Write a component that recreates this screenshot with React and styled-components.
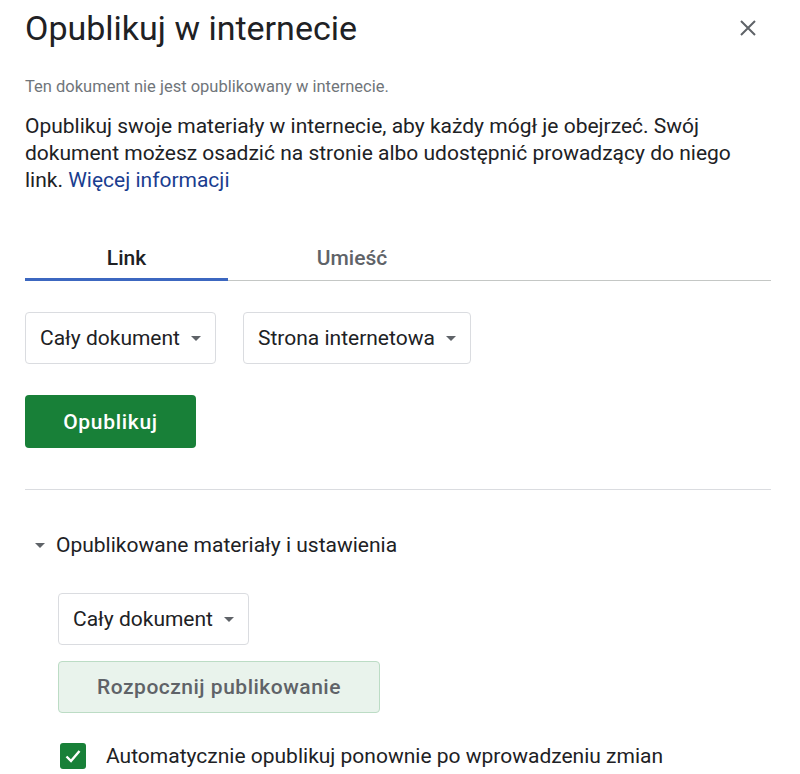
import React from 'react';
import styled, { createGlobalStyle } from 'styled-components';

const GlobalStyle = createGlobalStyle`
  html, body {
    margin: 0;
    background: #fff;
    font-family: Roboto, "Noto Sans", Arial, sans-serif;
    color: #202124;
  }
`;

const Dialog = styled.div`
  width: 800px;
  box-sizing: border-box;
  padding: 8px 29px 0 25px;
`;

const Header = styled.div`
  display: flex;
  justify-content: space-between;
  align-items: center;
  height: 40px;
`;

const Title = styled.h1`
  margin: 0;
  font-size: 34px;
  font-weight: 400;
  color: #202124;
`;

const Close = styled.button`
  border: 0;
  background: none;
  padding: 0;
  margin-right: 11px;
  width: 24px;
  height: 24px;
  display: flex;
  align-items: center;
  justify-content: center;
  cursor: pointer;
`;

const Status = styled.p`
  margin: 29px 0 0;
  font-size: 16.5px;
  line-height: 19px;
  color: #70757a;
`;

const Intro = styled.p`
  margin: 17px 0 0;
  width: 748px;
  font-size: 21px;
  line-height: 27px;
  color: #202124;
`;

const More = styled.a`
  color: #1a3d8f;
  text-decoration: none;
`;

const Tabs = styled.div`
  display: flex;
  margin-top: 52px;
  border-bottom: 1px solid #c4c7c5;
`;

const Tab = styled.div`
  width: ${p => p.$width}px;
  text-align: center;
  font-size: 21px;
  line-height: 24px;
  font-weight: 500;
  padding-bottom: 8px;
  color: ${p => (p.$active ? '#202124' : '#5f6368')};
  border-bottom: 3px solid ${p => (p.$active ? '#3c67c0' : 'transparent')};
  margin-bottom: -1px;
`;

const Row = styled.div`
  display: flex;
  gap: 27px;
  margin-top: 31px;
`;

const Select = styled.div`
  display: inline-flex;
  align-items: center;
  gap: 11px;
  height: 52px;
  box-sizing: border-box;
  padding: 0 14px;
  border: 1px solid #dadce0;
  border-radius: 4px;
  font-size: 21px;
  color: #202124;
  background: #fff;
`;

const Caret = styled.span`
  width: 0;
  height: 0;
  border-left: 5px solid transparent;
  border-right: 5px solid transparent;
  border-top: 5px solid #5f6368;
`;

const PublishButton = styled.button`
  display: block;
  margin-top: 31px;
  width: 171px;
  height: 53px;
  border: 0;
  border-radius: 4px;
  background: #188038;
  color: #fff;
  font-family: inherit;
  font-size: 21px;
  letter-spacing: 0.7px;
  font-weight: 500;
`;

const Divider = styled.hr`
  margin: 41px 0 0;
  border: 0;
  border-top: 1px solid #dadce0;
`;

const SectionHead = styled.div`
  display: flex;
  align-items: center;
  gap: 11px;
  margin-top: 43px;
  padding-left: 10px;
  font-size: 21px;
  line-height: 24px;
  color: #202124;
`;

const Section = styled.div`
  padding-left: 33px;
  display: flex;
  flex-direction: column;
  align-items: flex-start;
`;

const Nested = styled.div`
  margin-top: 36px;
`;

const StartButton = styled.button`
  margin-top: 16px;
  width: 322px;
  height: 52px;
  border: 1px solid #bcdcc5;
  border-radius: 4px;
  background: #e9f3ec;
  color: #5f6368;
  font-family: inherit;
  font-size: 21px;
  letter-spacing: 0.5px;
  font-weight: 500;
`;

const CheckRow = styled.label`
  display: flex;
  align-items: center;
  gap: 20px;
  margin-top: 30px;
  padding-left: 2px;
  font-size: 21px;
  line-height: 24px;
  color: #202124;
`;

const Box = styled.span`
  width: 26px;
  height: 26px;
  border-radius: 3px;
  background: #188038;
  display: flex;
  align-items: center;
  justify-content: center;
`;

export default function App() {
  return (
    <>
      <GlobalStyle />
      <Dialog>
        <Header>
          <Title>Opublikuj w internecie</Title>
          <Close aria-label="Zamknij">
            <svg width="18" height="18" viewBox="0 0 18 18">
              <path d="M2 2 L16 16 M16 2 L2 16" stroke="#5f6368" strokeWidth="2" />
            </svg>
          </Close>
        </Header>
        <Status>Ten dokument nie jest opublikowany w internecie.</Status>
        <Intro>
          Opublikuj swoje materiały w internecie, aby każdy mógł je obejrzeć. Swój
          dokument możesz osadzić na stronie albo udostępnić prowadzący do niego
          link. <More href="#">Więcej informacji</More>
        </Intro>
        <Tabs>
          <Tab $active $width={203}>Link</Tab>
          <Tab $width={248}>Umieść</Tab>
        </Tabs>
        <Row>
          <Select>Cały dokument<Caret /></Select>
          <Select>Strona internetowa<Caret /></Select>
        </Row>
        <PublishButton>Opublikuj</PublishButton>
        <Divider />
        <SectionHead>
          <Caret />
          Opublikowane materiały i ustawienia
        </SectionHead>
        <Section>
          <Nested>
            <Select>Cały dokument<Caret /></Select>
          </Nested>
          <StartButton>Rozpocznij publikowanie</StartButton>
          <CheckRow>
            <Box>
              <svg width="20" height="20" viewBox="0 0 20 20">
                <path d="M3.5 10.5 L8 15 L16.5 5" fill="none" stroke="#fff" strokeWidth="2.4" />
              </svg>
            </Box>
            Automatycznie opublikuj ponownie po wprowadzeniu zmian
          </CheckRow>
        </Section>
      </Dialog>
    </>
  );
}
